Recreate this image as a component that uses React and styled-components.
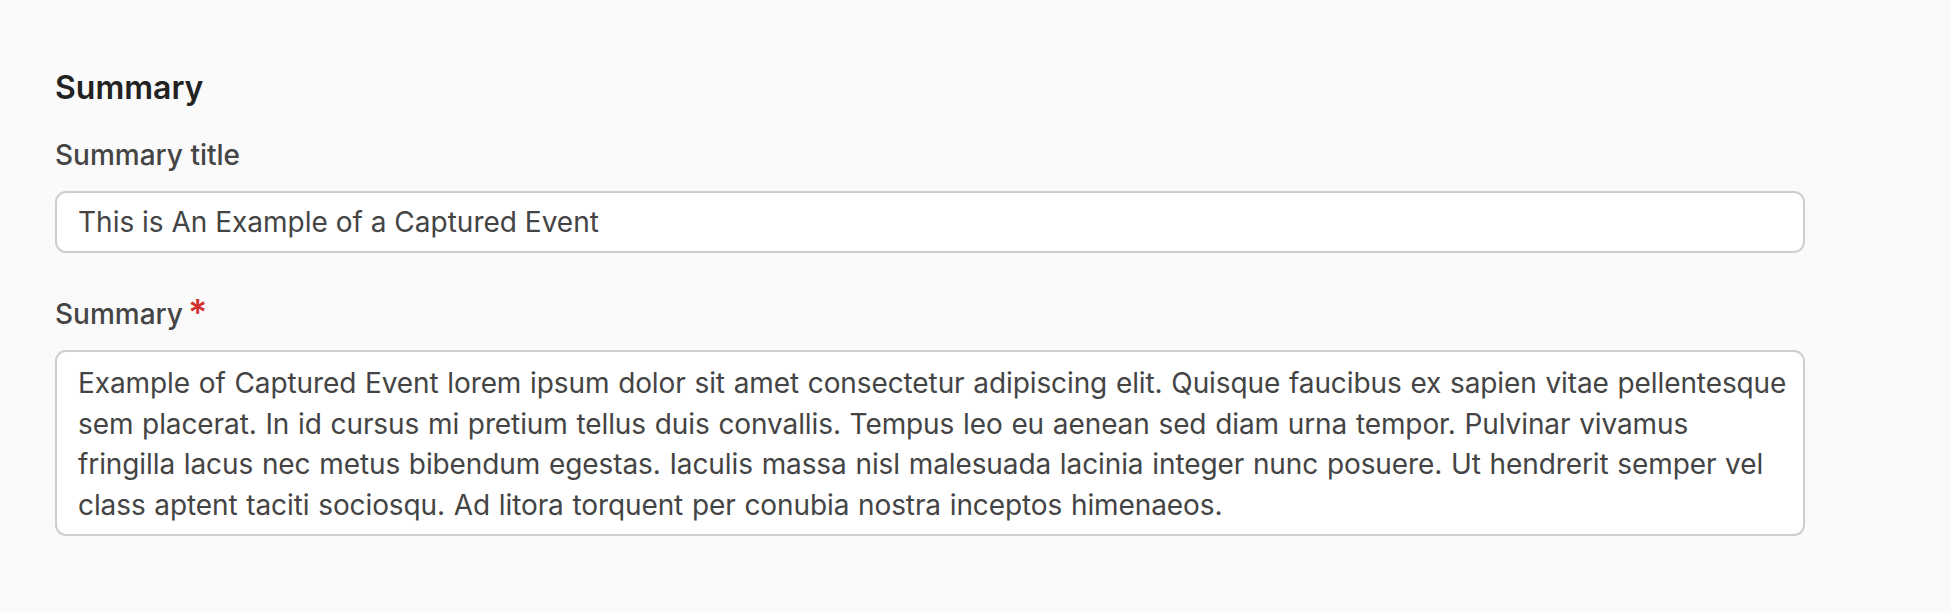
import React from 'react'
import styled, { createGlobalStyle } from 'styled-components'

const GlobalStyle = createGlobalStyle`
  html, body {
    margin: 0;
    padding: 0;
    background: #fafafa;
  }
  body {
    font-family: Inter, "Noto Sans", sans-serif;
    color: #444;
  }
`

const Page = styled.div`
  min-height: 612px;
  box-sizing: border-box;
  padding: 65px 0 0 55px;
  width: 1805px;
`

const Section = styled.section`
  display: flex;
  flex-direction: column;
`

const Title = styled.h2`
  margin: 0 0 25px;
  font-size: 32px;
  line-height: 45px;
  font-weight: 600;
  color: #222;
`

const Field = styled.div`
  display: flex;
  flex-direction: column;
  gap: 16px;
  margin-bottom: ${(p) => p.$spacing || 0}px;
`

const Label = styled.label`
  font-size: 28px;
  line-height: 40px;
  font-weight: 500;
  color: #454545;
  display: flex;
  align-items: flex-start;
  gap: 5px;
`

const Required = styled.span`
  color: #d3302f;
  font-size: 36px;
  line-height: 36px;
  font-weight: 600;
`

const baseInput = `
  box-sizing: border-box;
  width: 100%;
  margin: 0;
  border: 2px solid #cecece;
  border-radius: 11px;
  background: #fff;
  font-family: Inter, "Noto Sans", sans-serif;
  font-size: 28px;
  line-height: 40.5px;
  color: #444;
  padding: 9px 21px;
  outline: none;
`

const TextInput = styled.input`
  ${baseInput}
  height: 62px;
`

const TextArea = styled.textarea`
  ${baseInput}
  height: 186px;
  resize: none;
  overflow: hidden;
  padding: 11px 16px 9px 21px;
  letter-spacing: -0.1px;
  word-spacing: 1px;
`

const summaryText =
  'Example of Captured Event lorem ipsum dolor sit amet consectetur adipiscing elit. Quisque faucibus ex sapien vitae pellentesque sem placerat. In id cursus mi pretium tellus duis convallis. Tempus leo eu aenean sed diam urna tempor. Pulvinar vivamus fringilla lacus nec metus bibendum egestas. Iaculis massa nisl malesuada lacinia integer nunc posuere. Ut hendrerit semper vel class aptent taciti sociosqu. Ad litora torquent per conubia nostra inceptos himenaeos.'

export default function App() {
  return (
    <>
      <GlobalStyle />
      <Page>
        <Section>
          <Title>Summary</Title>
          <Field $spacing={41}>
            <Label htmlFor="summary-title">Summary title</Label>
            <TextInput
              id="summary-title"
              type="text"
              readOnly
              defaultValue="This is An Example of a Captured Event"
            />
          </Field>
          <Field>
            <Label htmlFor="summary-body">
              Summary
              <Required>*</Required>
            </Label>
            <TextArea id="summary-body" readOnly defaultValue={summaryText} />
          </Field>
        </Section>
      </Page>
    </>
  )
}
